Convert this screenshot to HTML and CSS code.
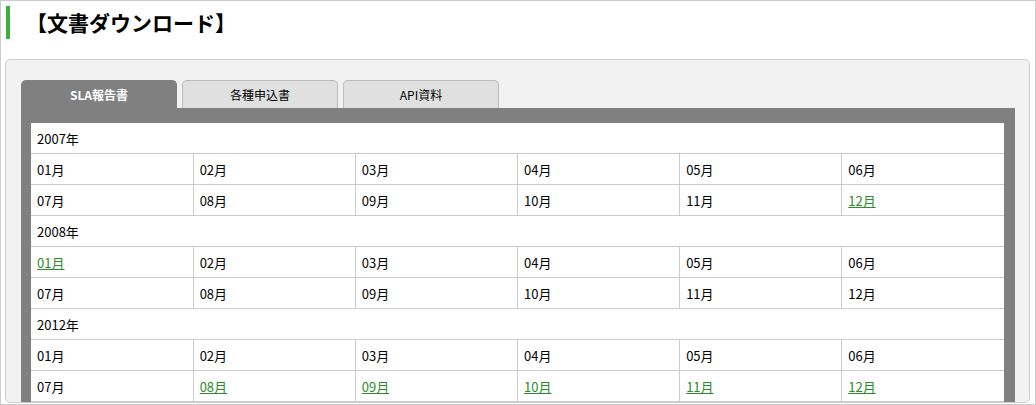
FILE: index.html
```html
<!DOCTYPE html>
<html lang="ja">

<head>
    <meta charset="UTF-8">
    <meta name="viewport" content="width=device-width, initial-scale=1.0">
    <title>文書ダウンロード</title>
    <link rel="stylesheet" href="styles.css">
</head>

<body>
    <div class="page">
        <h2 class="title">【文書ダウンロード】</h2>

        <div class="panel">
            <div class="tabs">
                <div class="tab active">SLA報告書</div>
                <div class="tab">各種申込書</div>
                <div class="tab">API資料</div>
            </div>
            <div class="tab-body">
                <table class="docs">
                    <tr>
                        <td class="year" colspan="6">2007年</td>
                    </tr>
                    <tr>
                        <td>01月</td><td>02月</td><td>03月</td><td>04月</td><td>05月</td><td>06月</td>
                    </tr>
                    <tr>
                        <td>07月</td><td>08月</td><td>09月</td><td>10月</td><td>11月</td><td><a href="#">12月</a></td>
                    </tr>
                    <tr>
                        <td class="year" colspan="6">2008年</td>
                    </tr>
                    <tr>
                        <td><a href="#">01月</a></td><td>02月</td><td>03月</td><td>04月</td><td>05月</td><td>06月</td>
                    </tr>
                    <tr>
                        <td>07月</td><td>08月</td><td>09月</td><td>10月</td><td>11月</td><td>12月</td>
                    </tr>
                    <tr>
                        <td class="year" colspan="6">2012年</td>
                    </tr>
                    <tr>
                        <td>01月</td><td>02月</td><td>03月</td><td>04月</td><td>05月</td><td>06月</td>
                    </tr>
                    <tr>
                        <td>07月</td><td><a href="#">08月</a></td><td><a href="#">09月</a></td><td><a href="#">10月</a></td><td><a href="#">11月</a></td><td><a href="#">12月</a></td>
                    </tr>
                </table>
            </div>
        </div>
    </div>
</body>

</html>
```

FILE: styles.css
```css
body {
    margin: 0px;
    padding: 0px;
    font-family: "Noto Sans CJK JP", "Noto Sans", sans-serif;
    color: #000;
    background-color: #fff;
}

.page {
    height: 405px;
    box-sizing: border-box;
    border: 1px solid #ccc;
    overflow: hidden;
}

.title {
    margin: 5px 0px 0px 5px;
    height: 33px;
    border-left: 4px solid #3bb03b;
    padding-left: 16px;
    font-size: 21px;
    font-weight: bold;
    line-height: 33px;
}

.panel {
    margin: 20px 5px 0px 4px;
    padding: 20px 14px 0px 15px;
    background-color: #f2f2f2;
    border: 1px solid #ccc;
    border-radius: 5px;
}

.tabs {
    display: flex;
    gap: 5px;
}

.tab {
    width: 156px;
    height: 28px;
    box-sizing: border-box;
    background-color: #e0e0e0;
    border: 1px solid #bbb;
    border-bottom: none;
    border-radius: 5px 5px 0px 0px;
    font-size: 12px;
    line-height: 28px;
    text-align: center;
}

.tab.active {
    background-color: #808080;
    border-color: #808080;
    color: #fff;
    font-weight: bold;
}

.tab-body {
    background-color: #808080;
    padding: 15px 11px 0px 10px;
}

.docs {
    width: 100%;
    table-layout: fixed;
    border-collapse: collapse;
    background-color: #fff;
}

.docs td {
    height: 30px;
    padding: 0px 6px;
    border-bottom: 1px solid #ccc;
    border-left: 1px solid #ccc;
    font-size: 13px;
}

.docs td:first-child {
    border-left: none;
}

.docs a {
    color: #2d8a2d;
}
```
